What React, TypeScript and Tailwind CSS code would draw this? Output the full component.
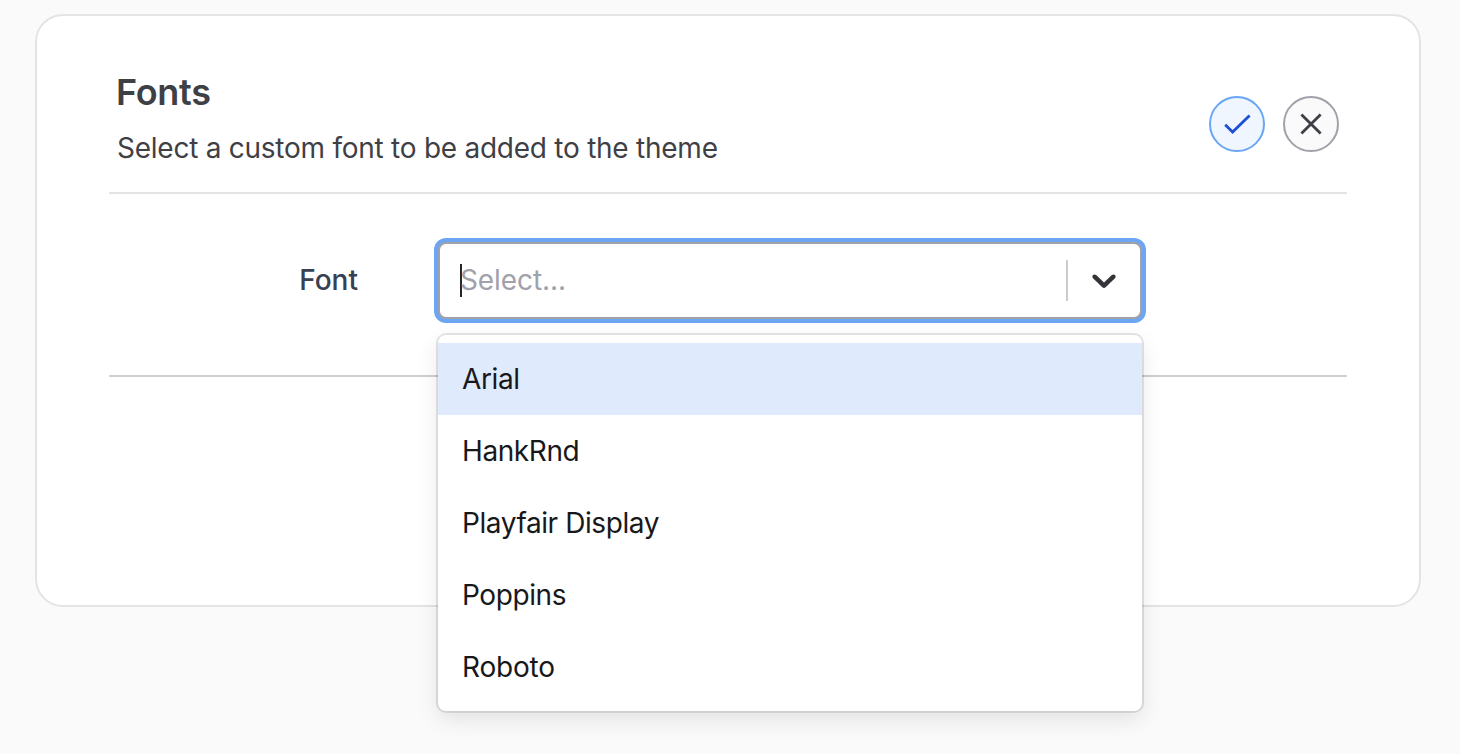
import React from "react";

const options = [
  { name: "Arial", tracking: "tracking-[-0.4px]" },
  { name: "HankRnd", tracking: "tracking-[-0.4px]" },
  { name: "Playfair Display", tracking: "tracking-[-0.42px]" },
  { name: "Poppins", tracking: "tracking-[-0.4px]" },
  { name: "Roboto", tracking: "tracking-[-0.2px]" },
];

function Header() {
  return (
    <header className="flex h-[178px] items-start justify-between border-b-2 border-[#e4e4e4] pr-2 pl-2">
      <div className="pt-[54px]">
        <h1 className="-ml-px text-[36px] leading-[44px] font-semibold tracking-[-0.3px] text-[#3f3f46]">Fonts</h1>
        <p className="mt-[16px] text-[28px] leading-[36px] tracking-[-0.25px] whitespace-nowrap text-[#3f3f46]">
          Select a custom font to be added to the theme
        </p>
      </div>
      <div className="mt-[80px] flex gap-[18px]">
        <button aria-label="Confirm" className="size-14 rounded-full border-2 border-[#6aa5f7] bg-[#eff6ff]">
          <svg viewBox="2 2 52 52" className="size-[52px]" fill="none" stroke="#1d4ed8" strokeWidth="2.8">
            <path d="M16.2 28.8 L23.6 36 L40.6 19.4" />
          </svg>
        </button>
        <button aria-label="Cancel" className="size-14 rounded-full border-2 border-[#a1a1aa] bg-[#fafafa]">
          <svg viewBox="2 2 52 52" className="size-[52px]" fill="none" stroke="#3f3f46" strokeWidth="2.8">
            <path d="M18.4 18.4 L37.6 37.6 M37.6 18.4 L18.4 37.6" />
          </svg>
        </button>
      </div>
    </header>
  );
}

function FontSelect() {
  return (
    <div className="relative w-[704px]">
      <div className="flex h-[77px] items-center rounded-[8px] border-2 border-[#a1a1aa] bg-white ring-4 ring-[#6ca5f3]">
        <div className="ml-5 h-[33px] w-[2px] bg-[#27272a]" />
        <div className="mb-px -ml-[2px] flex-1 text-[28px] leading-[36px] tracking-[-0.1px] text-[#a1a1aa]">
          Select...
        </div>
        <div className="h-[41px] w-[2px] bg-[#cccccc]" />
        <svg viewBox="0 0 20 20" className="mx-4 mb-[2px] size-10" fill="#333338">
          <path d="M4.516 7.548c0.436-0.446 1.043-0.481 1.576 0l3.908 3.747 3.908-3.747c0.533-0.481 1.141-0.446 1.574 0 0.436 0.445 0.408 1.197 0 1.615-0.406 0.418-4.695 4.502-4.695 4.502-0.217 0.223-0.502 0.335-0.787 0.335s-0.57-0.112-0.789-0.335c0 0-4.287-4.084-4.695-4.502s-0.436-1.17 0-1.615z" />
        </svg>
      </div>
      <ul className="absolute top-[93px] left-0 w-[704px] rounded-[8px] bg-white py-2 shadow-[0_0_0_2px_rgba(0,0,0,0.1),0_8px_22px_rgba(0,0,0,0.1)]">
        {options.map(({ name, tracking }, i) => (
          <li
            key={name}
            className={`flex h-[72px] items-center px-6 text-[28px] text-[#18181b] ${tracking} ${
              i === 0 ? "bg-[#dfeafd]" : ""
            }`}
          >
            {name}
          </li>
        ))}
      </ul>
    </div>
  );
}

export default function App() {
  return (
    <main className="h-[754px] w-[1460px] overflow-hidden bg-[#fafafa] pt-[14px] pl-[35px] font-['Inter',sans-serif]">
      <section className="h-[593px] w-[1386px] rounded-[28px] border-2 border-[#e4e4e4] bg-white px-[72px]">
        <Header />
        <div className="flex h-[183px] items-start border-b-2 border-[#d0d0d4] pt-12">
          <label className="w-[249px] pt-5 text-right text-[28px] leading-[36px] font-medium text-[#374151]">
            Font
          </label>
          <div className="ml-20">
            <FontSelect />
          </div>
        </div>
      </section>
    </main>
  );
}
